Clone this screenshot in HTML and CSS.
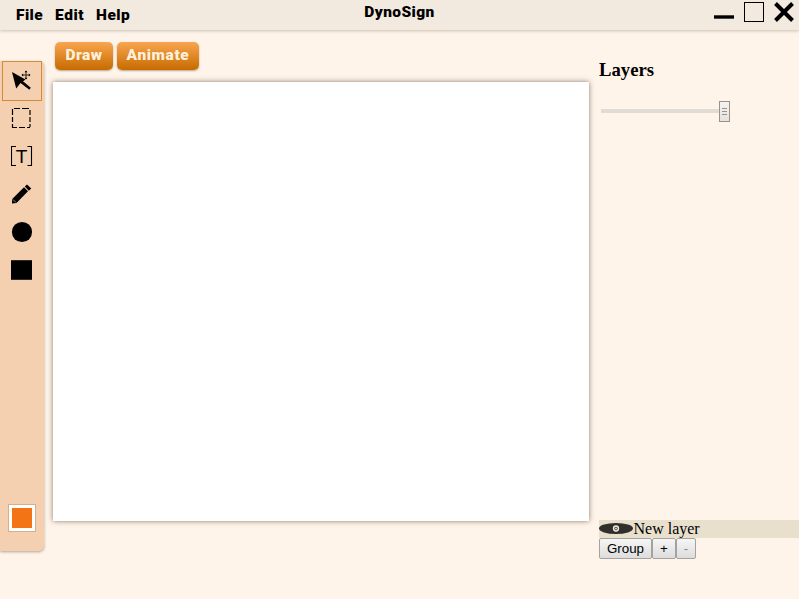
FILE: index.html
```html
<!DOCTYPE html>
<html lang="en">
<head>
<meta charset="utf-8">
<title>DynoSign</title>
<link rel="stylesheet" href="styles.css">
</head>
<body>
<header class="titlebar">
  <nav class="menu"><span class="file">File</span><span class="edit">Edit</span><span class="help">Help</span></nav>
  <div class="title">DynoSign</div>
  <div class="controls">
    <svg width="20" height="24" viewBox="0 0 20 24"><path d="M0 17H20" stroke="#000" stroke-width="3.4"/></svg>
    <svg width="20" height="24" viewBox="0 0 20 24"><rect x=".5" y="2.5" width="19" height="19" fill="none" stroke="#000"/></svg>
    <svg width="20" height="24" viewBox="0 0 20 24"><path d="M1.5 3.5L18.5 20.5M18.5 3.5L1.5 20.5" stroke="#000" stroke-width="4"/></svg>
  </div>
</header>
<main class="workspace">
  <aside class="tools">
    <button class="tool selected" aria-label="Move"><svg width="22" height="22" viewBox="0 0 22 22"><path d="M1 2L14.500 9.500 12 11.200 19.800 17.800 18.400 19.800 9.500 13 5.200 18.500Z"/><path d="M15 1V9M11 5H19" stroke="#000" stroke-width=".8"/><path d="M13.500 2.200L15 .5 16.500 2.200ZM13.500 7.800L15 9.500 16.500 7.800ZM12.200 3.500L10.500 5 12.200 6.500ZM17.800 3.500L19.500 5 17.800 6.500Z"/></svg></button>
    <button class="tool" aria-label="Select"><svg width="22" height="22" viewBox="0 0 22 22"><path d="M3 1.500H9M11 1.500H18M1 20.500H6M8 20.500H14M16 20.500H19M1.500 2V8M1.500 10V15M1.500 17V21M19 3V8M19 10V15M19 17V20" fill="none" stroke="#000" stroke-width="1.200"/></svg></button>
    <button class="tool" aria-label="Text"><svg width="22" height="22" viewBox="0 0 22 22"><path d="M5 1.500H.5V20.500H5M16.500 1.500H20.500V20.500H16.500" fill="none" stroke="#000" stroke-width="1.100"/><text class="letter" x="10.500" y="18" text-anchor="middle">T</text></svg></button>
    <button class="tool" aria-label="Pencil"><svg width="22" height="22" viewBox="0 0 22 22"><path d="M1 20.500L1.200 16 13 4.300 17 8.300 5.500 20ZM13.800 3.600L16 1.500 20.300 5.500 17.800 7.800Z"/><path d="M2 16.500L5 19.500" stroke="#f4cfb0" stroke-width=".7"/></svg></button>
    <button class="tool" aria-label="Ellipse"><svg width="22" height="22" viewBox="0 0 22 22"><circle cx="11" cy="11" r="10.100"/></svg></button>
    <button class="tool" aria-label="Rectangle"><svg width="22" height="22" viewBox="0 0 22 22"><path d="M0 1.200H21V20.800H0Z"/></svg></button>
    <div class="swatch"></div>
  </aside>
  <section class="stage">
    <div class="modes"><button class="mode draw"><span>Draw</span></button><button class="mode animate"><span>Animate</span></button></div>
    <div class="canvas"></div>
  </section>
  <aside class="layers">
    <h3>Layers</h3>
    <div class="slider"><div class="track"></div><svg width="11" height="21" viewBox="0 0 11 21"><defs><linearGradient id="thumb" x1="0" y1="0" x2="0" y2="1"><stop offset="0" stop-color="#f5f3f1"/><stop offset="1" stop-color="#e6e2de"/></linearGradient></defs><rect x=".5" y=".5" width="10" height="20" fill="url(#thumb)" stroke="#99928b"/><path d="M3 7.500H8M3 10.500H8M3 13.500H8" stroke="#99928b"/></svg></div>
    <div class="layer"><svg width="34" height="18" viewBox="0 0 34 18"><ellipse cx="17" cy="8.500" rx="17" ry="5.500" fill="#302f2d"/><circle cx="17" cy="8.500" r="2.400" fill="#302f2d" stroke="#f4ecd9" stroke-width="1.500"/><circle cx="17" cy="8.500" r=".9" fill="#f4ecd9"/></svg><span>New layer</span></div>
    <div class="actions"><button class="group">Group</button><button class="plus">+</button><button class="minus">-</button></div>
  </aside>
</main>
</body>
</html>
```
FILE: styles.css
```css
* { box-sizing: border-box; }
body {
  margin: 0;
  height: 599px;
  overflow: hidden;
  background: #fff4ea;
  color: #000;
  font-family: "Liberation Serif", serif;
}
button { margin: 0; padding: 0; }
svg { display: block; }
.titlebar {
  height: 30px;
  display: grid;
  grid-template-columns: 1fr 80px 1fr;
  background: #f2e9df;
  box-shadow: 0 1px 3px rgba(90, 70, 50, .3);
  font: 900 15.500px/18px Roboto, "Liberation Sans", sans-serif;
}
.menu { display: flex; padding: 6px 0 0 16px; }
.file { width: 39px; letter-spacing: .4px; }
.edit { width: 41px; letter-spacing: .6px; }
.help { letter-spacing: .5px; }
.title { padding-top: 3px; text-align: center; white-space: nowrap; letter-spacing: .4px; }
.controls { display: flex; justify-content: flex-end; gap: 10px; padding-right: 5px; }
.workspace { display: grid; grid-template-columns: 44px 555px 200px; height: 569px; }
.tools {
  height: 490px;
  margin-top: 31px;
  padding: 0 2px 19px;
  display: flex;
  flex-direction: column;
  background: #f4cfb0;
  border-radius: 0 5px 5px 0;
  box-shadow: 0 1px 3px rgba(90, 65, 45, .45);
}
.tool {
  width: 40px;
  height: 38px;
  flex: none;
  display: grid;
  place-items: center;
  border: 0;
  background: none;
}
.tool.selected { height: 40px; margin-bottom: -2px; border: 1px solid #d58a35; }
.letter { font: 19px "Liberation Sans", sans-serif; }
.swatch {
  width: 28px;
  height: 28px;
  margin: auto 0 0 6px;
  border: 1px solid #d9ad86;
  background: #f37414;
  box-shadow: inset 0 0 0 3px #fff;
}
.stage { padding: 12px 0 0 9px; }
.modes { display: flex; gap: 4px; padding-left: 2px; }
.mode {
  height: 28px;
  border: 0;
  border-radius: 5px;
  background: linear-gradient(#f9a650, #c66b00);
  color: #fff0dc;
  font: 900 15.500px/26px Roboto, "Liberation Sans", sans-serif;
  box-shadow: 0 1px 2px rgba(80, 50, 20, .4);
  display: flex;
  justify-content: center;
}
.draw { width: 58px; letter-spacing: .4px; }
.animate { width: 82px; letter-spacing: .6px; }
.canvas { width: 536px; height: 439px; margin-top: 12px; background: #fff; box-shadow: 0 0 5px rgba(90, 65, 45, .7); }
.layers { height: 529px; display: flex; flex-direction: column; }
.layers h3 { margin: 29px 0 0; font-size: 18.720px; line-height: 22px; }
.slider { display: flex; align-items: center; height: 21px; margin: 20px 0 0 2px; }
.track { width: 118px; height: 4px; margin-bottom: 1px; background: #e1dcd6; }
.layer { height: 18px; margin-top: auto; display: flex; background: #e8e0cd; font-size: 16px; line-height: 18px; }
.layer span { padding-left: .5px; }
.actions { display: flex; height: 21px; }
.actions button {
  height: 21px;
  border: 1px solid #a5a19d;
  border-radius: 2px;
  background: linear-gradient(#f5f5f5, #dddddd);
  color: #000;
  font: 13.333px/18px "Liberation Sans", sans-serif;
}
.actions .group { width: 53px; }
.actions .plus { width: 24px; }
.actions .minus { width: 20px; color: #888; }
```
